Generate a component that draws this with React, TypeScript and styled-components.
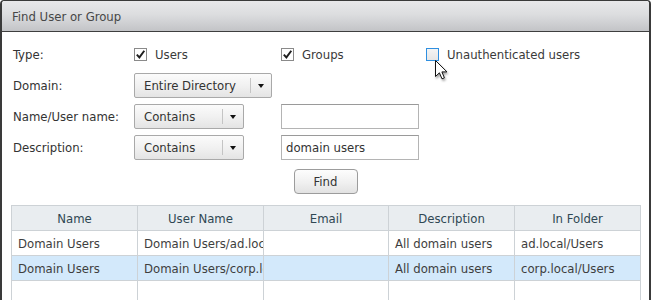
import React from "react";
import styled, { createGlobalStyle } from "styled-components";

const GlobalStyle = createGlobalStyle`
  html, body {
    margin: 0;
    padding: 0;
    background: #ffffff;
  }
  body {
    font-family: "DejaVu Sans Condensed", "DejaVu Sans", Tahoma, sans-serif;
    font-size: 13px;
    color: #333333;
  }
`;

const Page = styled.div`
  width: 652px;
  height: 300px;
  overflow: hidden;
  position: relative;
`;

const Dialog = styled.section`
  width: 651px;
  height: 320px;
  box-sizing: border-box;
  border: 2px solid #3a3a3a;
  border-top-width: 1px;
  border-radius: 4px 4px 0 0;
  background: #ffffff;
`;

const TitleBar = styled.header`
  height: 31px;
  box-sizing: border-box;
  padding-left: 10px;
  display: flex;
  align-items: center;
  background: linear-gradient(to bottom, #e8e8ea 0%, #dcdddf 45%, #c3c4c7 100%);
  border-bottom: 1px solid #3e3e3e;
  border-radius: 3px 3px 0 0;
  color: #474747;
`;

const Form = styled.div`
  display: grid;
  grid-template-columns: 121px auto;
  row-gap: 6px;
  padding: 10px 0 0 11px;
`;

const Label = styled.div`
  display: flex;
  align-items: center;
  height: 25px;
  color: #333333;
`;

const Controls = styled.div`
  display: flex;
  align-items: center;
  height: 25px;
`;

const Option = styled.label<{ $width?: number }>`
  display: flex;
  align-items: center;
  gap: 8px;
  width: ${({ $width }) => ($width ? `${$width}px` : "auto")};
  color: #3a3a3a;
`;

const Box = styled.span<{ $hover?: boolean }>`
  width: 13px;
  height: 13px;
  box-sizing: border-box;
  display: inline-flex;
  align-items: center;
  justify-content: center;
  border: 1px solid ${({ $hover }) => ($hover ? "#2f8fe0" : "#8a8a8a")};
  background: ${({ $hover }) =>
    $hover ? "linear-gradient(#f4f4f4, #e6e6e6)" : "#ffffff"};
`;

const Select = styled.div<{ $width: number }>`
  width: ${({ $width }) => $width}px;
  height: 25px;
  box-sizing: border-box;
  display: flex;
  align-items: center;
  border: 1px solid #a9a9a9;
  border-radius: 2px;
  background: linear-gradient(to bottom, #fbfbfb 0%, #f1f1f1 50%, #e4e4e4 100%);
  color: #333333;
`;

const SelectText = styled.span`
  flex: 1;
  padding-left: 9px;
`;

const SelectArrow = styled.span`
  width: 20px;
  height: 15px;
  display: flex;
  align-items: center;
  justify-content: center;
  border-left: 1px solid #c4c4c4;
  &::after {
    content: "";
    border-left: 3.5px solid transparent;
    border-right: 3.5px solid transparent;
    border-top: 4px solid #111111;
  }
`;

const TextField = styled.div`
  width: 138px;
  height: 25px;
  margin-left: 37px;
  box-sizing: border-box;
  display: flex;
  align-items: center;
  padding-left: 4px;
  border: 1px solid #b4b4b4;
  border-top-color: #9a9a9a;
  background: #ffffff;
  color: #333333;
`;

const ButtonRow = styled.div`
  display: flex;
  justify-content: center;
  padding: 9px 0 11px;
`;

const Button = styled.button`
  width: 64px;
  height: 25px;
  border: 1px solid #9c9c9c;
  border-radius: 4px;
  background: linear-gradient(to bottom, #fdfdfd 0%, #f0f0f0 55%, #e2e2e2 100%);
  font: inherit;
  color: #333333;
  padding: 0;
`;

const Grid = styled.table`
  margin-left: 9px;
  border-collapse: collapse;
  table-layout: fixed;
  width: 630px;
`;

const HeadCell = styled.th`
  height: 24px;
  padding: 0;
  border: 1px solid #cdd2d6;
  background: #e9edf0;
  font-weight: normal;
  color: #2f4753;
  text-align: center;
`;

const Row = styled.tr<{ $selected?: boolean }>`
  background: ${({ $selected }) => ($selected ? "#d3e9fb" : "#ffffff")};
`;

const Cell = styled.td`
  height: 24px;
  padding: 0 0 0 6px;
  border: 1px solid #cdd2d6;
  border-top-color: #d8dcdf;
  white-space: nowrap;
  overflow: hidden;
  color: #3e3e3e;
`;

const Cursor = styled.svg`
  position: absolute;
  left: 435px;
  top: 60px;
  filter: drop-shadow(1px 2px 1px rgba(0, 0, 0, 0.35));
`;

const Check = () => (
  <svg width="11" height="11" viewBox="0 0 11 11">
    <path d="M1.8 5.6 L4.4 8.4 L9.3 1.8" fill="none" stroke="#1e1e1e" strokeWidth="1.9" />
  </svg>
);

const Dropdown: React.FC<{ text: string; width: number }> = ({ text, width }) => (
  <Select $width={width}>
    <SelectText>{text}</SelectText>
    <SelectArrow />
  </Select>
);

const columns = ["Name", "User Name", "Email", "Description", "In Folder"];
const rows = [
  ["Domain Users", "Domain Users/ad.local", "", "All domain users", "ad.local/Users"],
  ["Domain Users", "Domain Users/corp.local", "", "All domain users", "corp.local/Users"],
  ["", "", "", "", ""],
  ["", "", "", "", ""],
];

export default function App() {
  return (
    <Page>
      <GlobalStyle />
      <Dialog>
        <TitleBar>Find User or Group</TitleBar>
        <Form>
          <Label>Type:</Label>
          <Controls>
            <Option $width={147}>
              <Box>
                <Check />
              </Box>
              Users
            </Option>
            <Option $width={145}>
              <Box>
                <Check />
              </Box>
              Groups
            </Option>
            <Option>
              <Box $hover />
              Unauthenticated users
            </Option>
          </Controls>

          <Label>Domain:</Label>
          <Controls>
            <Dropdown text="Entire Directory" width={138} />
          </Controls>

          <Label>Name/User name:</Label>
          <Controls>
            <Dropdown text="Contains" width={110} />
            <TextField />
          </Controls>

          <Label>Description:</Label>
          <Controls>
            <Dropdown text="Contains" width={110} />
            <TextField>domain users</TextField>
          </Controls>
        </Form>
        <ButtonRow>
          <Button>Find</Button>
        </ButtonRow>
        <Grid>
          <colgroup>
            <col style={{ width: 126 }} />
            <col style={{ width: 126 }} />
            <col style={{ width: 125 }} />
            <col style={{ width: 126 }} />
            <col style={{ width: 126 }} />
          </colgroup>
          <thead>
            <tr>
              {columns.map((c) => (
                <HeadCell key={c}>{c}</HeadCell>
              ))}
            </tr>
          </thead>
          <tbody>
            {rows.map((r, i) => (
              <Row key={i} $selected={i === 1}>
                {r.map((v, j) => (
                  <Cell key={j}>{v}</Cell>
                ))}
              </Row>
            ))}
          </tbody>
        </Grid>
      </Dialog>
      <Cursor width="14" height="21" viewBox="0 0 14 21">
        <path
          d="M0.5 0.5 L0.5 16.5 L4.4 12.8 L7 18.8 L9.4 17.8 L6.9 11.9 L12 11.9 Z"
          fill="#ffffff"
          stroke="#111111"
          strokeWidth="1"
          strokeLinejoin="round"
        />
      </Cursor>
    </Page>
  );
}
